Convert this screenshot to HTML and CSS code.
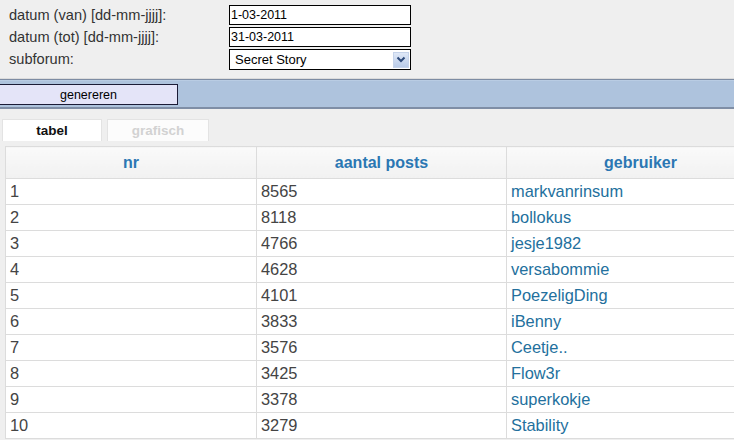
FILE: index.html
```html
<!DOCTYPE html>
<html lang="nl">
<head>
  <meta charset="UTF-8">
  <meta name="viewport" content="width=device-width, initial-scale=1.0">
  <title>Statistieken - posts per gebruiker</title>
  <link rel="stylesheet" href="styles.css">
</head>
<body>
  <form class="filters">
    <label for="van">datum (van) [dd-mm-jjjj]:</label>
    <input type="text" id="van" value="1-03-2011">
    <label for="tot">datum (tot) [dd-mm-jjjj]:</label>
    <input type="text" id="tot" value="31-03-2011">
    <label for="subforum">subforum:</label>
    <div class="select">
      <span>Secret Story</span>
      <span class="arrow">
        <svg width="10" height="7" viewBox="0 0 10 7"><path d="M1.5 1.5 L5 5 L8.5 1.5" fill="none" stroke="#2d4a7a" stroke-width="2"/></svg>
      </span>
    </div>
  </form>

  <div class="bar">
    <button type="button" class="generate">genereren</button>
  </div>

  <div class="tabs">
    <div class="tab active">tabel</div>
    <div class="tab">grafisch</div>
  </div>

  <div class="results">
    <table>
      <thead>
        <tr><th>nr</th><th>aantal posts</th><th>gebruiker</th></tr>
      </thead>
      <tbody>
        <tr><td>1</td><td>8565</td><td><a href="#">markvanrinsum</a></td></tr>
        <tr><td>2</td><td>8118</td><td><a href="#">bollokus</a></td></tr>
        <tr><td>3</td><td>4766</td><td><a href="#">jesje1982</a></td></tr>
        <tr><td>4</td><td>4628</td><td><a href="#">versabommie</a></td></tr>
        <tr><td>5</td><td>4101</td><td><a href="#">PoezeligDing</a></td></tr>
        <tr><td>6</td><td>3833</td><td><a href="#">iBenny</a></td></tr>
        <tr><td>7</td><td>3576</td><td><a href="#">Ceetje..</a></td></tr>
        <tr><td>8</td><td>3425</td><td><a href="#">Flow3r</a></td></tr>
        <tr><td>9</td><td>3378</td><td><a href="#">superkokje</a></td></tr>
        <tr><td>10</td><td>3279</td><td><a href="#">Stability</a></td></tr>
      </tbody>
    </table>
  </div>
</body>
</html>
```

FILE: styles.css
```css
html, body {
  overflow: hidden;
}
body {
  margin: 0;
  background: #efefef;
  font-family: "Liberation Sans", Arial, sans-serif;
  color: #333;
}
.filters {
  display: grid;
  grid-template-columns: 220px 182px;
  grid-auto-rows: 20px;
  row-gap: 2px;
  align-items: center;
  padding: 5px 0 0 9px;
  margin: 0;
}
.filters label {
  font-size: 14.6px;
  color: #333;
}
.filters input {
  box-sizing: border-box;
  width: 182px;
  height: 20px;
  margin: 0;
  padding: 0 1px;
  border: 1px solid #000;
  background: #fff;
  font-family: "Liberation Sans", Arial, sans-serif;
  font-size: 12.5px;
  color: #000;
  outline: none;
}
.select {
  box-sizing: border-box;
  height: 21px;
  align-self: start;
  display: flex;
  align-items: center;
  justify-content: space-between;
  border: 1px solid #000;
  background: #fff;
  padding: 0 1px 0 5px;
  font-size: 13px;
  color: #000;
}
.select .arrow {
  width: 16px;
  height: 16px;
  display: flex;
  align-items: center;
  justify-content: center;
  background: linear-gradient(#dfe8f7, #b9cbe8);
  border: 1px solid #c5d3ea;
  box-sizing: border-box;
}
.bar {
  margin-top: 10px;
  height: 30px;
  padding-top: 4px;
  box-sizing: border-box;
  background: #aec3dd;
  border-top: 1px solid #7d8ca3;
  border-bottom: 2px solid #7f8ea6;
  box-shadow: 0 -1px 0 #dcdcdc, inset 0 1px 0 #b9cce3;
}
.generate {
  display: block;
  margin-left: -1px;
  width: 179px;
  height: 21px;
  padding: 0;
  border: 1px solid #1b1b36;
  background: #e4e4f8;
  font-family: "Liberation Sans", Arial, sans-serif;
  font-size: 12.5px;
  color: #000;
}
.tabs {
  display: flex;
  gap: 5px;
  margin: 10px 0 0 2px;
}
.tab {
  box-sizing: border-box;
  width: 100px;
  height: 22px;
  line-height: 21px;
  text-align: center;
  background: #fff;
  border: 1px solid #e3e3e3;
  border-bottom: none;
  font-size: 13.5px;
  font-weight: bold;
  color: #d2d2d2;
}
.tab + .tab {
  width: 102px;
  background: #fcfcfc;
}
.tab.active {
  color: #111;
}
.results {
  margin: 5px 0 0 5px;
}
table {
  width: 770px;
  border-collapse: collapse;
  table-layout: fixed;
  background: #fff;
}
th, td {
  border: 1px solid #dcdcdc;
  text-align: left;
}
th:nth-child(1), td:nth-child(1) { width: 250px; }
th:nth-child(2), td:nth-child(2) { width: 249px; }
th {
  height: 31px;
  padding: 0;
  text-align: center;
  font-size: 16px;
  font-weight: bold;
  color: #2b77b3;
  background: linear-gradient(#fafafa, #f1f1f1);
}
td {
  height: 25px;
  padding: 0 0 0 4px;
  font-size: 16.4px;
  color: #444;
}
td a {
  color: #23709d;
  text-decoration: none;
}
```
